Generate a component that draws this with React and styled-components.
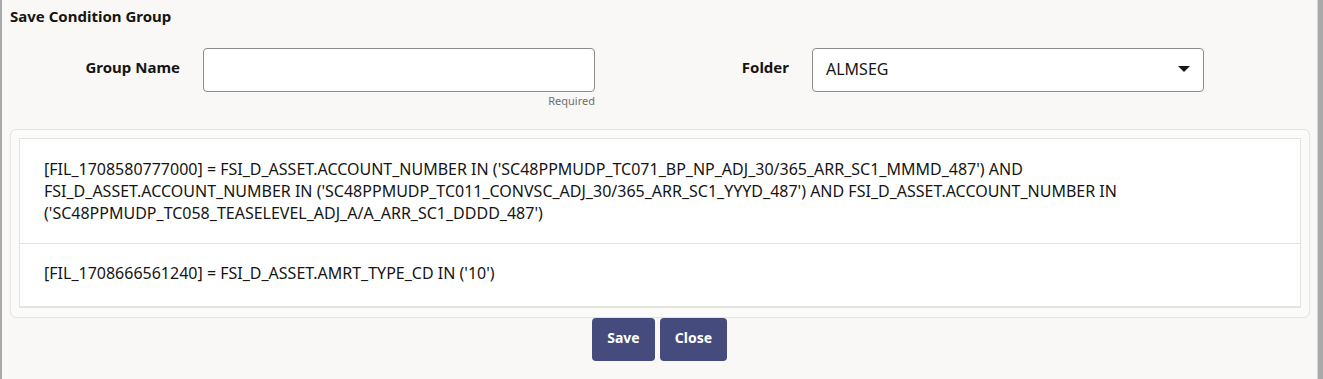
import styled, { createGlobalStyle } from "styled-components";

const GlobalStyle = createGlobalStyle`
  html, body {
    margin: 0;
    padding: 0;
    background: #a9a9a9;
  }
  body {
    font-family: "Noto Sans", "Open Sans", sans-serif;
    color: #161513;
  }
`;

const Dialog = styled.div`
  margin-left: 2px;
  width: 1316px;
  height: 379px;
  box-sizing: border-box;
  background: #f9f8f6;
  border-right: 1px solid #d6d6d6;
  padding: 0 8px;
  display: flex;
  flex-direction: column;
`;

const Title = styled.h3`
  margin: 0;
  padding: 6px 0 0 0;
  font-size: 15px;
  font-weight: 700;
  line-height: 20px;
`;

const FormRow = styled.div`
  display: flex;
  align-items: flex-start;
  margin-top: 22px;
  height: 81px;
`;

const Label = styled.label`
  width: ${(p) => p.width};
  text-align: right;
  padding-right: 23px;
  box-sizing: border-box;
  font-size: 15px;
  font-weight: 700;
  line-height: 38px;
  flex-shrink: 0;
`;

const Field = styled.div`
  display: flex;
  flex-direction: column;
  align-items: flex-end;
  width: 392px;
`;

const Box = styled.div`
  width: 100%;
  height: 44px;
  box-sizing: border-box;
  background: #fff;
  border: 1px solid #8d8c8a;
  border-radius: 4px;
  display: flex;
  align-items: center;
  justify-content: space-between;
  padding: 0 13px 2px;
  font-size: 16px;
`;

const Hint = styled.span`
  font-size: 11px;
  color: #6f6e6c;
  margin-top: 2px;
  line-height: 14px;
`;

const Caret = styled.span`
  width: 0;
  height: 0;
  border-left: 6px solid transparent;
  border-right: 6px solid transparent;
  border-top: 6px solid #161513;
`;

const Panel = styled.div`
  width: 1300px;
  box-sizing: border-box;
  border: 1px solid #e4e3e1;
  border-radius: 6px;
  background: #fbfbfa;
  padding: 8px 8px 9px 8px;
`;

const List = styled.div`
  background: #fff;
  border: 1px solid #e4e3e1;
  border-bottom: 2px solid #e4e3e1;
`;

const Row = styled.div`
  padding: ${(p) => p.pad};
  font-size: 16px;
  line-height: 22px;
  & + & {
    border-top: 1px solid #e4e3e1;
  }
`;

const Actions = styled.div`
  display: flex;
  justify-content: center;
  gap: 5px;
`;

const Button = styled.button`
  height: 43px;
  min-width: ${(p) => p.w};
  padding: 0 0 4px;
  border: none;
  border-radius: 4px;
  background: #464b7d;
  color: #fff;
  font-family: inherit;
  font-size: 14px;
  font-weight: 700;
  cursor: pointer;
`;

export default function App() {
  return (
    <>
      <GlobalStyle />
      <Dialog>
        <Title>Save Condition Group</Title>
        <FormRow>
          <Label width="193px">Group Name</Label>
          <Field>
            <Box />
            <Hint>Required</Hint>
          </Field>
          <Label width="217px">Folder</Label>
          <Field>
            <Box>
              ALMSEG
              <Caret />
            </Box>
          </Field>
        </FormRow>
        <Panel>
          <List>
            <Row pad="19px 24px 19px">
              [FIL_1708580777000] = FSI_D_ASSET.ACCOUNT_NUMBER IN
              ('SC48PPMUDP_TC071_BP_NP_ADJ_30/365_ARR_SC1_MMMD_487') AND
              <br />
              FSI_D_ASSET.ACCOUNT_NUMBER IN
              ('SC48PPMUDP_TC011_CONVSC_ADJ_30/365_ARR_SC1_YYYD_487') AND
              FSI_D_ASSET.ACCOUNT_NUMBER IN
              <br />
              ('SC48PPMUDP_TC058_TEASELEVEL_ADJ_A/A_ARR_SC1_DDDD_487')
            </Row>
            <Row pad="18px 24px 22px">
              [FIL_1708666561240] = FSI_D_ASSET.AMRT_TYPE_CD IN ('10')
            </Row>
          </List>
        </Panel>
        <Actions>
          <Button w="63px">Save</Button>
          <Button w="67px">Close</Button>
        </Actions>
      </Dialog>
    </>
  );
}
